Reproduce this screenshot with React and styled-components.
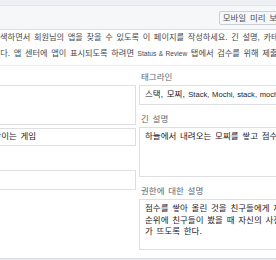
import React from "react";
import styled, { createGlobalStyle } from "styled-components";

const GlobalStyle = createGlobalStyle`
  html, body {
    margin: 0;
    padding: 0;
    background: #fff;
    overflow: hidden;
  }
  body {
    font-family: "Liberation Sans", "Noto Sans CJK KR", sans-serif;
    font-size: 8.5px;
    word-spacing: 1.4px;
    color: #1d2129;
  }
`;

const Viewport = styled.div`
  width: 276px;
  height: 260px;
  overflow: hidden;
  background: #eef0f3;
`;

// the panel is wider than the window, its left part is scrolled away
const Panel = styled.div`
  margin: 5px 0 0 -110px;
  width: 407px;
  background: #fff;
`;

const Header = styled.div`
  height: 23px;
  background: #f6f7f9;
  border-top: 1px solid #e5e6e9;
  border-bottom: 1px solid #dddfe2;
  display: flex;
  align-items: center;
  justify-content: flex-end;
  padding: 0 8px;
`;

const Button = styled.button`
  height: 12px;
  padding: 0 3px;
  border: 1px solid #ccd0d5;
  border-radius: 2px;
  background: #f6f7f9;
  color: #4b4f56;
  font-family: inherit;
  font-size: 8.5px;
  word-spacing: 1.4px;
  line-height: 12px;
  white-space: nowrap;
  box-sizing: content-box;
`;

const Latin = styled.span`
  font-size: ${(p) => p.$size}px;
  word-spacing: 0.6px;
  margin-left: ${(p) => p.$lead || 0}px;
`;

const Help = styled.div`
  padding: 0 0 3px 5px;
  border-bottom: 1px solid #e9ebee;
  font-size: 8.2px;
  line-height: 16px;
  color: #444950;
`;

const HelpLine = styled.div`
  white-space: nowrap;
`;

const Form = styled.div`
  display: grid;
  grid-template-columns: 246px 1fr;
  column-gap: 3px;
  padding: 6px 8px 0 0;
  height: 186px;
`;

const Column = styled.div`
  display: flex;
  flex-direction: column;
  gap: ${(p) => p.$gap}px;
`;

const Field = styled.div`
  display: flex;
  flex-direction: column;
  gap: 3px;
`;

const Label = styled.div`
  line-height: 10px;
  color: #606770;
  padding-left: 2px;
  white-space: nowrap;
`;

const Box = styled.div`
  box-sizing: border-box;
  height: ${(p) => p.$h}px;
  border: 1px solid #dddfe2;
  background: #fff;
  padding: ${(p) => (p.$multi ? "3px 5px" : "0 5px")};
  display: ${(p) => (p.$multi ? "block" : "flex")};
  align-items: center;
  line-height: 11.5px;
  color: #1d2129;
  white-space: ${(p) => (p.$multi ? "pre" : "nowrap")};
  overflow: hidden;
`;

const Footer = styled.div`
  height: 3px;
  border-top: 1px solid #dddfe2;
  background: #e9ebee;
`;

export default function App() {
  return (
    <Viewport>
      <GlobalStyle />
      <Panel>
        <Header>
          <Button>모바일 미리 보기</Button>
        </Header>
        <Help>
          <HelpLine>
            사람들이 앱 센터에서 앱을 검색하면서 회원님의 앱을 찾을 수 있도록 이 페이지를 작성하세요. 긴 설명, 카테고리
          </HelpLine>
          <HelpLine>
            아이콘과 스크린샷이 필요합니다. 앱 센터에 앱이 표시되도록 하려면{" "}
            <Latin $size={6.6}>Status &amp; Review</Latin> 탭에서 검수를 위해 제출하세요.
          </HelpLine>
        </Help>
        <Form>
          <Column $gap={11}>
            <Field>
              <Label>표시 이름</Label>
              <Box $h={40} />
              <Box $h={18}>하늘에서 내려오는 모찌가 쌓이는 게임</Box>
            </Field>
            <Field>
              <Label>부제목</Label>
              <Box $h={20} />
            </Field>
          </Column>
          <Column $gap={9}>
            <Field>
              <Label>태그라인</Label>
              <Box $h={20}>
                <span>스택, 모찌,</span>
                <Latin $size={7.6} $lead={3.5}>
                  Stack, Mochi, stack, mochi
                </Latin>
              </Box>
            </Field>
            <Field>
              <Label>긴 설명</Label>
              <Box $h={50} $multi>
                하늘에서 내려오는 모찌를 쌓고 점수를 올리는 게임입니다.
              </Box>
            </Field>
            <Field>
              <Label>권한에 대한 설명</Label>
              <Box $h={51} $multi>
                {"점수를 쌓아 올린 것을 친구들에게 자랑하고,\n순위에 친구들이 봤을 때 자신의 사진과 점수\n가 뜨도록 한다."}
              </Box>
            </Field>
          </Column>
        </Form>
        <Footer />
      </Panel>
    </Viewport>
  );
}
